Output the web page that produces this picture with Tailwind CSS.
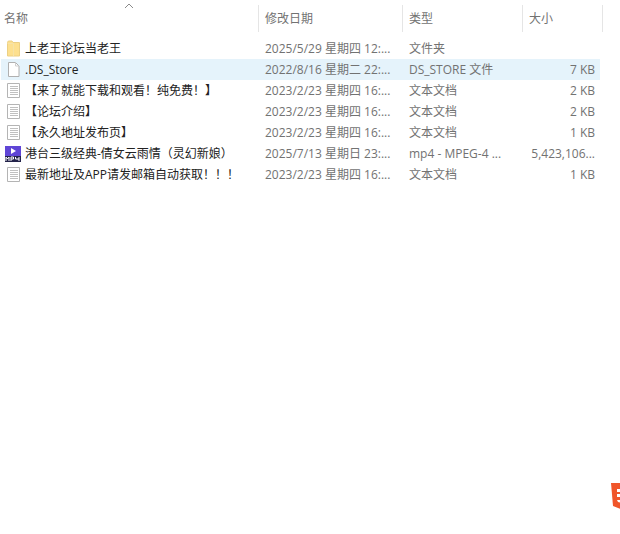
<!DOCTYPE html>
<html lang="zh"><head><meta charset="utf-8"><script src="https://cdn.jsdelivr.net/npm/@tailwindcss/browser@4"></script></head>
<body class="bg-white overflow-hidden">
<div class="relative w-[620px] h-[534px] overflow-hidden text-[12px] leading-[21px] font-['Open_Sans','Noto_Sans_CJK_SC',sans-serif] text-[#727272]">
  <div class="grid grid-cols-[259px_144px_120px_80px] h-[38px] pt-[5px]">
    <div class="relative h-[27px] pl-1 pt-[3px] border-r border-[#e5e5e5]">名称
      <svg class="absolute left-[124px] top-[-2px]" width="10" height="6" viewBox="0 0 10 6" fill="none" stroke="#8a8a8a"><path d="M1 5 L5 1 L9 5"/></svg>
    </div>
    <div class="h-[27px] pl-[6px] pt-[3px] border-r border-[#e5e5e5]">修改日期</div>
    <div class="h-[27px] pl-[6px] pt-[3px] border-r border-[#e5e5e5]">类型</div>
    <div class="h-[27px] pl-[6px] pt-[3px] border-r border-[#e5e5e5]">大小</div>
  </div>
  <div class="flex flex-col">
    <div class="grid grid-cols-[259px_144px_120px_72px] w-[595px] h-[21px] whitespace-nowrap">
      <div class="flex items-center text-[#222222]"><svg class="ml-[7px] mr-[5px] shrink-0" width="13" height="17" viewBox="0 0 13 17"><path d="M.5 2.5 q0-1.500 1.500-1.500 h3 l1 1.500 h6.500 v13.500 h-12 z" fill="#fde08f" stroke="#ecd084"/><path d="M.5 3.500 h6 v12.500" fill="none" stroke="#f6e3a8"/></svg><span>上老王论坛当老王</span></div>
      <div class="pl-[6px]">2025/5/29 星期四 12:...</div><div class="pl-[6px]">文件夹</div><div class="text-right"></div>
    </div>
    <div class="relative w-[599px] ml-[1px] bg-[#e5f3fb] h-[21px]">
      <div class="grid grid-cols-[258px_144px_120px_72px] whitespace-nowrap">
        <div class="flex items-center text-[#222222]"><svg class="ml-[6px] mr-[5px] shrink-0" width="13" height="17" viewBox="0 0 13 17"><path d="M1.500 1.500 h7 l3.500 3.500 v10.500 h-10.500 z" fill="#fff" stroke="#b0b0b0"/><path d="M8.500 1.500 v3.500 h3.500" fill="none" stroke="#cfcfcf"/></svg><span>.DS_Store</span></div>
        <div class="pl-[6px]">2022/8/16 星期二 22:...</div><div class="pl-[6px]">DS_STORE 文件</div><div class="text-right">7 KB</div>
      </div>
    </div>
    <div class="grid grid-cols-[259px_144px_120px_72px] w-[595px] h-[21px] whitespace-nowrap">
      <div class="flex items-center text-[#222222]"><svg class="ml-[7px] mr-[4px] shrink-0" width="14" height="17" viewBox="0 0 14 17"><path d="M.5 1.500 h12 v14 h-12 z" fill="#fff" stroke="#b4b4b4"/><path d="M3 4.500 h8 M3 6.500 h8 M3 8.500 h8 M3 10.500 h8 M3 12.500 h8" stroke="#c0c0c0"/></svg><span>【来了就能下载和观看！纯免费！】</span></div>
      <div class="pl-[6px]">2023/2/23 星期四 16:...</div><div class="pl-[6px]">文本文档</div><div class="text-right">2 KB</div>
    </div>
    <div class="grid grid-cols-[259px_144px_120px_72px] w-[595px] h-[21px] whitespace-nowrap">
      <div class="flex items-center text-[#222222]"><svg class="ml-[7px] mr-[4px] shrink-0" width="14" height="17" viewBox="0 0 14 17"><path d="M.5 1.500 h12 v14 h-12 z" fill="#fff" stroke="#b4b4b4"/><path d="M3 4.500 h8 M3 6.500 h8 M3 8.500 h8 M3 10.500 h8 M3 12.500 h8" stroke="#c0c0c0"/></svg><span>【论坛介绍】</span></div>
      <div class="pl-[6px]">2023/2/23 星期四 16:...</div><div class="pl-[6px]">文本文档</div><div class="text-right">2 KB</div>
    </div>
    <div class="grid grid-cols-[259px_144px_120px_72px] w-[595px] h-[21px] whitespace-nowrap">
      <div class="flex items-center text-[#222222]"><svg class="ml-[7px] mr-[4px] shrink-0" width="14" height="17" viewBox="0 0 14 17"><path d="M.5 1.500 h12 v14 h-12 z" fill="#fff" stroke="#b4b4b4"/><path d="M3 4.500 h8 M3 6.500 h8 M3 8.500 h8 M3 10.500 h8 M3 12.500 h8" stroke="#c0c0c0"/></svg><span>【永久地址发布页】</span></div>
      <div class="pl-[6px]">2023/2/23 星期四 16:...</div><div class="pl-[6px]">文本文档</div><div class="text-right">1 KB</div>
    </div>
    <div class="grid grid-cols-[259px_144px_120px_72px] w-[595px] h-[21px] whitespace-nowrap">
      <div class="flex items-center text-[#222222]"><svg class="ml-[5px] mr-[4px] shrink-0" width="16" height="16" viewBox="0 0 16 16"><rect width="16" height="10" fill="#5f45d6"/><path d="M6 2 L11 5 L6 8 z" fill="#fff"/><rect y="10" width="16" height="6" fill="#23234a"/><path d="M1 15 V11 L2.500 13 L4 11 V15 M6 15 V11 H8.500 V13 H6 M10.500 11 V13 H14 M14 11 V15" fill="none" stroke="#fff" stroke-width="1"/></svg><span>港台三级经典-倩女云雨情（灵幻新娘）</span></div>
      <div class="pl-[6px]">2025/7/13 星期日 23:...</div><div class="pl-[6px]">mp4 - MPEG-4 ...</div><div class="text-right">5,423,106...</div>
    </div>
    <div class="grid grid-cols-[259px_144px_120px_72px] w-[595px] h-[21px] whitespace-nowrap">
      <div class="flex items-center text-[#222222]"><svg class="ml-[7px] mr-[4px] shrink-0" width="14" height="17" viewBox="0 0 14 17"><path d="M.5 1.500 h12 v14 h-12 z" fill="#fff" stroke="#b4b4b4"/><path d="M3 4.500 h8 M3 6.500 h8 M3 8.500 h8 M3 10.500 h8 M3 12.500 h8" stroke="#c0c0c0"/></svg><span>最新地址及APP请发邮箱自动获取！！！</span></div>
      <div class="pl-[6px]">2023/2/23 星期四 16:...</div><div class="pl-[6px]">文本文档</div><div class="text-right">1 KB</div>
    </div>
  </div>
  <svg class="absolute left-[610px] top-[482px]" width="26" height="30" viewBox="0 0 26 30"><path d="M1 1 H25 L23 24 L13 28 L3 24 z" fill="#f0562a"/><path d="M7 7 H13 V10 H7z M7 12 H13 V15 H7z M7 18 H13 V21 L8 20z" fill="#fff"/></svg>
</div>
</body></html>
